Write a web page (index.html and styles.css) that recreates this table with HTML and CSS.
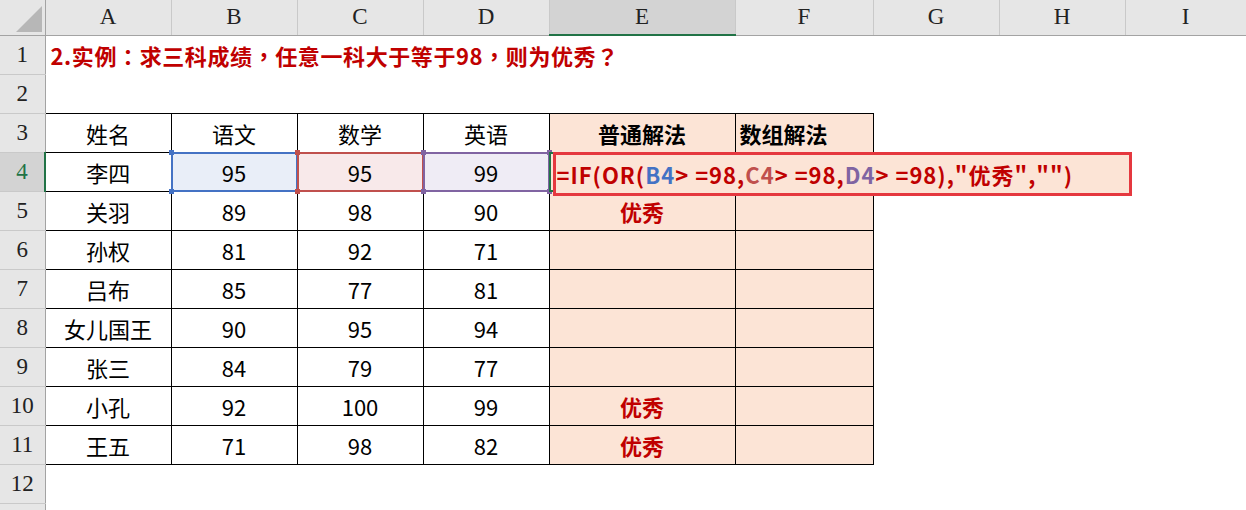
FILE: index.html
```html
<!DOCTYPE html>
<html lang="zh-CN">
<head>
<meta charset="utf-8">
<title>Sheet</title>
<link rel="stylesheet" href="styles.css">
</head>
<body>
<table class="sheet">
  <colgroup>
    <col class="c-rh"><col class="c-std"><col class="c-std"><col class="c-std"><col class="c-std"><col class="c-e"><col class="c-f"><col class="c-std"><col class="c-std"><col class="c-last">
  </colgroup>
  <thead>
    <tr class="hdr">
      <th class="corner"><svg class="tri" width="26" height="26" viewBox="0 0 26 26"><polygon points="26,0 26,26 0,26" fill="#b7b7b7"/></svg></th>
      <th>A</th><th>B</th><th>C</th><th>D</th><th class="sel-col">E</th><th>F</th><th>G</th><th>H</th><th>I</th>
    </tr>
  </thead>
  <tbody>
    <tr><th class="rh">1</th><td class="title" lang="zh-TW">2.实例：求三科成绩，任意一科大于等于98，则为优秀？</td><td></td><td></td><td></td><td></td><td></td><td></td><td></td><td></td></tr>
    <tr><th class="rh">2</th><td></td><td></td><td></td><td></td><td></td><td></td><td></td><td></td><td></td></tr>
    <tr><th class="rh">3</th><td class="b">姓名</td><td class="b">语文</td><td class="b">数学</td><td class="b">英语</td><td class="b pe strong">普通解法</td><td class="b pe strong left">数组解法</td><td></td><td></td><td></td></tr>
    <tr><th class="rh sel-row">4</th><td class="b">李四</td>
      <td class="b ref"><div class="rng blue"><i class="h tl"></i><i class="h tr"></i><i class="h bl"></i><i class="h br"></i></div><span class="v">95</span></td>
      <td class="b ref"><div class="rng red"><i class="h tl"></i><i class="h tr"></i><i class="h bl"></i><i class="h br"></i></div><span class="v">95</span></td>
      <td class="b ref"><div class="rng purple"><i class="h tl"></i><i class="h tr"></i><i class="h bl"></i><i class="h br"></i></div><span class="v">99</span></td>
      <td class="b pe active"><div class="cur"></div><div class="editor"><span class="fr">=IF(OR(</span><span class="fb">B4</span><span class="fr">&gt; =98,</span><span class="fc">C4</span><span class="fr">&gt; =98,</span><span class="fd">D4</span><span class="fr">&gt; =98),"优秀",</span><span class="fr">"")</span></div></td>
      <td class="b pe"></td><td></td><td></td><td></td></tr>
    <tr><th class="rh">5</th><td class="b">关羽</td><td class="b">89</td><td class="b">98</td><td class="b">90</td><td class="b pe ok">优秀</td><td class="b pe"></td><td></td><td></td><td></td></tr>
    <tr><th class="rh">6</th><td class="b">孙权</td><td class="b">81</td><td class="b">92</td><td class="b">71</td><td class="b pe"></td><td class="b pe"></td><td></td><td></td><td></td></tr>
    <tr><th class="rh">7</th><td class="b">吕布</td><td class="b">85</td><td class="b">77</td><td class="b">81</td><td class="b pe"></td><td class="b pe"></td><td></td><td></td><td></td></tr>
    <tr><th class="rh">8</th><td class="b">女儿国王</td><td class="b">90</td><td class="b">95</td><td class="b">94</td><td class="b pe"></td><td class="b pe"></td><td></td><td></td><td></td></tr>
    <tr><th class="rh">9</th><td class="b">张三</td><td class="b">84</td><td class="b">79</td><td class="b">77</td><td class="b pe"></td><td class="b pe"></td><td></td><td></td><td></td></tr>
    <tr><th class="rh">10</th><td class="b">小孔</td><td class="b">92</td><td class="b">100</td><td class="b">99</td><td class="b pe ok">优秀</td><td class="b pe"></td><td></td><td></td><td></td></tr>
    <tr><th class="rh">11</th><td class="b">王五</td><td class="b">71</td><td class="b">98</td><td class="b">82</td><td class="b pe ok">优秀</td><td class="b pe"></td><td></td><td></td><td></td></tr>
    <tr><th class="rh">12</th><td></td><td></td><td></td><td></td><td></td><td></td><td></td><td></td><td></td></tr>
    <tr><th class="rh"></th><td></td><td></td><td></td><td></td><td></td><td></td><td></td><td></td><td></td></tr>
  </tbody>
</table>
</body>
</html>
```

FILE: styles.css
```css
html, body {
  margin: 0;
  padding: 0;
  background: #ffffff;
  overflow: hidden;
}

.sheet {
  border-collapse: collapse;
  table-layout: fixed;
  width: 1246px;
  font-family: "Noto Sans CJK SC", "Liberation Sans", sans-serif;
  font-size: 22px;
  color: #000;
}

.c-rh { width: 45px; }
.c-std { width: 126px; }
.c-e { width: 186px; }
.c-f { width: 138px; }
.c-last { width: 121px; }

.sheet td, .sheet th {
  padding: 0;
  text-align: center;
  vertical-align: middle;
  white-space: nowrap;
  line-height: 22px;
}

.sheet tbody tr { height: 39px; }
.sheet thead tr.hdr { height: 35px; }

.hdr th {
  background: #e6e6e6;
  border-right: 1px solid #c9c9c9;
  border-bottom: 1px solid #a3a3a3;
  font-family: "Liberation Serif", "DejaVu Serif", serif;
  font-weight: normal;
  font-size: 23px;
  color: #222;
}

.hdr th.corner {
  position: relative;
  border-right: 1px solid #a3a3a3;
}

.tri {
  position: absolute;
  right: 3px;
  bottom: 3px;
}

.hdr th.sel-col {
  background: #d3d3d3;
  border-bottom: 2px solid #217346;
}

th.rh {
  background: #e6e6e6;
  border-right: 1px solid #a3a3a3;
  border-bottom: 1px solid #c9c9c9;
  font-family: "Liberation Serif", "DejaVu Serif", serif;
  font-weight: normal;
  font-size: 23px;
  color: #222;
}

th.rh.sel-row {
  background: #d3d3d3;
  border-right: 2px solid #217346;
  color: #217346;
}

td.title {
  text-align: left;
  padding-left: 5px;
  overflow: visible;
  color: #c00000;
  font-weight: bold;
  font-family: "Noto Sans CJK TC", "Noto Sans CJK SC", sans-serif;
  font-size: 22px;
  letter-spacing: 0.6px;
}

td.b {
  border: 1px solid #000;
}

td.pe { background: #fce4d6; }
td.strong { font-weight: bold; }
td.left { text-align: left; padding-left: 4px; }
td.ok { color: #c00000; font-weight: bold; }

td.ref { position: relative; }
td.ref .v { position: relative; }

.rng {
  position: absolute;
  left: -1px;
  top: -1px;
  right: -1px;
  bottom: -1px;
  border: 2px solid;
}
.rng.blue { border-color: #4472c4; background: #e9eef8; }
.rng.red { border-color: #c0504d; background: #f8e9ea; }
.rng.purple { border-color: #8064a2; background: #efecf5; }

.h {
  position: absolute;
  width: 5px;
  height: 5px;
}
.rng.blue .h { background: #4472c4; }
.rng.red .h { background: #c0504d; }
.rng.purple .h { background: #8064a2; }
.h.tl { left: -4px; top: -4px; }
.h.tr { right: -4px; top: -4px; }
.h.bl { left: -4px; bottom: -4px; }
.h.br { right: -4px; bottom: -4px; }

td.active { position: relative; }

.cur {
  position: absolute;
  left: -1px;
  top: -1px;
  right: -1px;
  bottom: -1px;
  border: 2px solid #217346;
}

.editor {
  position: absolute;
  left: 3px;
  top: -1px;
  width: 572px;
  height: 38px;
  border: 3px solid #e5383f;
  background: #fce4d6;
  text-align: left;
  font-weight: bold;
  font-size: 22px;
  line-height: 38px;
  padding-left: 1px;
  letter-spacing: 1px;
  font-family: "Noto Sans CJK TC", "Noto Sans CJK SC", sans-serif;
  z-index: 2;
}

.fr { color: #c00000; }
.fb { color: #4472c4; }
.fc { color: #c0504d; }
.fd { color: #8064a2; }
```
